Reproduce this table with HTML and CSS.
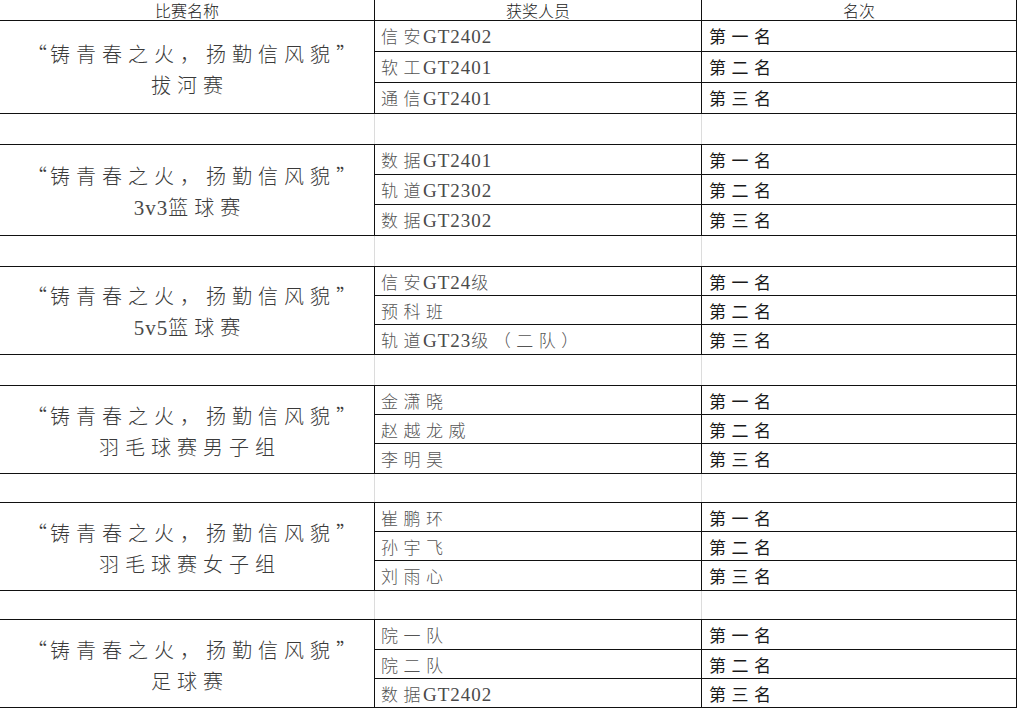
FILE: index.html
```html
<!DOCTYPE html>
<html lang="zh-CN">
<head>
<meta charset="utf-8">
<title>获奖名单</title>
<link rel="stylesheet" href="styles.css">
</head>
<body>
<div class="sheet">
  <div class="head">
    <div class="hc">比赛名称</div>
    <div class="hc">获奖人员</div>
    <div class="hc">名次</div>
  </div>

  <div class="group r1">
    <div class="event"><div class="l1"><span class="qo">“</span>铸青春之火，扬勤信风貌<span class="qc">”</span></div><div class="l2">拔河赛</div></div>
    <div class="who">信安<span class="lat">GT2402</span></div><div class="rank">第一名</div>
    <div class="who">软工<span class="lat">GT2401</span></div><div class="rank">第二名</div>
    <div class="who">通信<span class="lat">GT2401</span></div><div class="rank">第三名</div>
  </div>
  <div class="gap"><div class="gc"></div><div class="gc"></div><div class="gc"></div></div>

  <div class="group r2">
    <div class="event"><div class="l1"><span class="qo">“</span>铸青春之火，扬勤信风貌<span class="qc">”</span></div><div class="l2"><span class="lat">3v3</span>篮球赛</div></div>
    <div class="who">数据<span class="lat">GT2401</span></div><div class="rank">第一名</div>
    <div class="who">轨道<span class="lat">GT2302</span></div><div class="rank">第二名</div>
    <div class="who">数据<span class="lat">GT2302</span></div><div class="rank">第三名</div>
  </div>
  <div class="gap"><div class="gc"></div><div class="gc"></div><div class="gc"></div></div>

  <div class="group r3">
    <div class="event"><div class="l1"><span class="qo">“</span>铸青春之火，扬勤信风貌<span class="qc">”</span></div><div class="l2"><span class="lat">5v5</span>篮球赛</div></div>
    <div class="who">信安<span class="lat">GT24</span>级</div><div class="rank">第一名</div>
    <div class="who">预科班</div><div class="rank">第二名</div>
    <div class="who">轨道<span class="lat">GT23</span>级（二队）</div><div class="rank">第三名</div>
  </div>
  <div class="gap"><div class="gc"></div><div class="gc"></div><div class="gc"></div></div>

  <div class="group r3">
    <div class="event"><div class="l1"><span class="qo">“</span>铸青春之火，扬勤信风貌<span class="qc">”</span></div><div class="l2">羽毛球赛男子组</div></div>
    <div class="who">金潇晓</div><div class="rank">第一名</div>
    <div class="who">赵越龙威</div><div class="rank">第二名</div>
    <div class="who">李明昊</div><div class="rank">第三名</div>
  </div>
  <div class="gap gap-s"><div class="gc"></div><div class="gc"></div><div class="gc"></div></div>

  <div class="group r3">
    <div class="event"><div class="l1"><span class="qo">“</span>铸青春之火，扬勤信风貌<span class="qc">”</span></div><div class="l2">羽毛球赛女子组</div></div>
    <div class="who">崔鹏环</div><div class="rank">第一名</div>
    <div class="who">孙宇飞</div><div class="rank">第二名</div>
    <div class="who">刘雨心</div><div class="rank">第三名</div>
  </div>
  <div class="gap gap-s"><div class="gc"></div><div class="gc"></div><div class="gc"></div></div>

  <div class="group r6">
    <div class="event"><div class="l1"><span class="qo">“</span>铸青春之火，扬勤信风貌<span class="qc">”</span></div><div class="l2">足球赛</div></div>
    <div class="who">院一队</div><div class="rank">第一名</div>
    <div class="who">院二队</div><div class="rank">第二名</div>
    <div class="who">数据<span class="lat">GT2402</span></div><div class="rank">第三名</div>
  </div>
</div>
</body>
</html>
```

FILE: styles.css
```css
* { box-sizing: border-box; }

html, body {
  margin: 0;
  padding: 0;
  background: #ffffff;
}

body {
  font-family: "Noto Sans CJK SC", "Noto Sans", sans-serif;
  color: #222;
}

.sheet {
  width: 1017px;
}

.head {
  display: grid;
  grid-template-columns: 375px 327px 315px;
  height: 21px;
  border-bottom: 1px solid #111;
}

.hc {
  border-right: 1px solid #111;
  text-align: center;
  font-size: 16px;
  line-height: 20px;
  color: #222;
  font-weight: 300;
}

.group {
  display: grid;
  grid-template-columns: 375px 327px 315px;
}

.r1 { grid-template-rows: 31px 31px 31px; }
.r2 { grid-template-rows: 30px 30px 31px; }
.r3 { grid-template-rows: 29px 29px 30px; }
.r6 { grid-template-rows: 30px 29px 29px; }

.event {
  grid-row: span 3;
  border-right: 1px solid #111;
  border-bottom: 1px solid #111;
  display: flex;
  flex-direction: column;
  align-items: center;
  justify-content: center;
  padding-top: 3px;
  font-size: 20px;
  line-height: 31px;
  letter-spacing: 6px;
  color: #3a3a3a;
  font-weight: 300;
}

.event .l1,
.event .l2 {
  padding-left: 6px;
  white-space: nowrap;
}

.qo,
.qc {
  display: inline-block;
  width: 17px;
  letter-spacing: 0;
}

.qo { text-align: right; margin-right: 6px; }
.qc { text-align: left; }

.event .lat {
  font-size: 21px;
  letter-spacing: 1px;
  margin-left: 0;
}

.who,
.rank {
  border-right: 1px solid #111;
  border-bottom: 1px solid #111;
  font-size: 17px;
  letter-spacing: 5.5px;
  line-height: 28px;
  padding-top: 1px;
  white-space: nowrap;
}

.who {
  padding-left: 6px;
  color: #555;
  font-weight: 300;
}

.rank {
  padding-left: 7px;
  color: #1a1a1a;
}

.lat {
  font-family: "Liberation Serif", serif;
  font-size: 19px;
  letter-spacing: 1px;
  margin-left: -3px;
  color: #4a4a4a;
}

.gap {
  display: grid;
  grid-template-columns: 375px 327px 315px;
  height: 31px;
  border-bottom: 1px solid #111;
}

.gap-s { height: 29px; }

.gc {
  border-right: 1px solid #dcdcdc;
}

.gc:last-child {
  border-right: 1px solid #111;
}
```
